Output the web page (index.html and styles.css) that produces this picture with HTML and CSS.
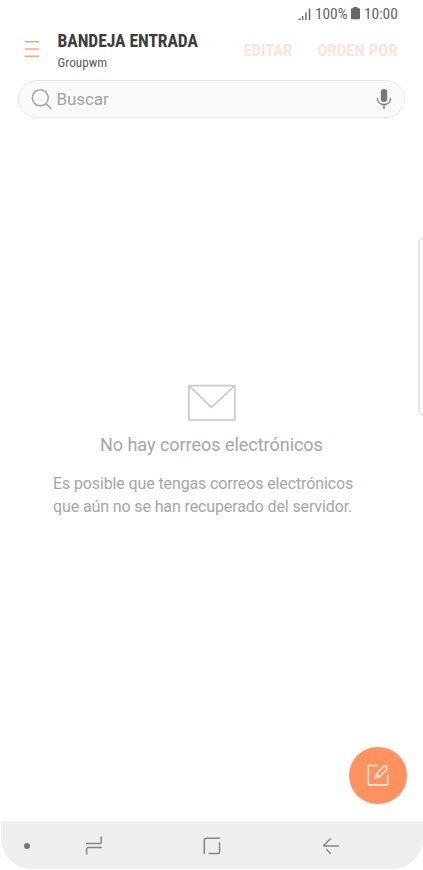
FILE: index.html
```html
<!DOCTYPE html>
<html lang="es">
<head>
    <meta charset="UTF-8">
    <meta name="viewport" content="width=device-width, initial-scale=1.0">
    <title>Bandeja entrada</title>
    <link rel="stylesheet" href="styles.css">
</head>
<body>

<div class="phone">
    <div class="status-bar">
        <svg class="signal" width="13" height="12" viewBox="0 0 13 12">
            <path d="M0 12L2.5 9.5V12ZM4 8H5.3V12H4ZM7.2 4.5H8.6V12H7.2ZM10.8 0.5H12.3V12H10.8Z"/>
        </svg>
        <span class="percent">100%</span>
        <svg class="battery" width="9" height="13" viewBox="0 0 9 13">
            <path d="M2.5 0H6.5V1.2H8.2Q9 1.2 9 2V11.5Q9 12.3 8.2 12.3H0.8Q0 12.3 0 11.5V2Q0 1.2 0.8 1.2H2.5Z"/>
        </svg>
        <span class="time">10:00</span>
    </div>

    <header class="header">
        <button type="button" class="menu" aria-label="Menu">
            <svg width="16" height="18" viewBox="0 0 16 18">
                <path d="M0.7 1.8H15.2M0.7 9H15.2M0.7 16.3H15.2"/>
            </svg>
        </button>
        <div class="heading">
            <h1>BANDEJA ENTRADA</h1>
            <p>Groupwm</p>
        </div>
        <button type="button" class="action edit">EDITAR</button>
        <button type="button" class="action sort">ORDEN POR</button>
    </header>

    <div class="search">
        <svg class="search-icon" width="21" height="21" viewBox="0 0 21 21">
            <circle cx="9.3" cy="8.8" r="8"/>
            <path d="M14.8 14.4L20.2 19.8"/>
        </svg>
        <span>Buscar</span>
        <svg class="mic" width="15" height="21" viewBox="0 0 15 21">
            <rect x="4.8" y="0" width="6.4" height="13" rx="3.2"/>
            <path d="M1.3 9.2C1.6 17.5 14.3 17.5 14.5 9.2M8 15.5V20"/>
        </svg>
    </div>

    <main class="empty">
        <svg width="48" height="38" viewBox="0 0 48 38">
            <rect x="0.9" y="1.7" width="45.9" height="34.5" rx="1"/>
            <path d="M1.4 2.2L23.6 23.3L46.2 2.2"/>
        </svg>
        <h2>No hay correos electrónicos</h2>
        <p>Es posible que tengas correos electrónicos<br>que aún no se han recuperado del servidor.</p>
    </main>

    <div class="edge-panel"></div>

    <button type="button" class="compose" aria-label="Redactar">
        <svg width="22" height="22" viewBox="0 0 22 22">
            <path d="M11 1.5H2.2Q1.3 1.5 1.3 2.4V20Q1.3 20.9 2.2 20.9H19.8Q20.7 20.9 20.7 20V11.3"/>
            <path d="M8.3 14L9.5 9.8L16.8 2.2Q17.6 1.4 18.5 2.2L20 3.7Q20.8 4.5 20 5.4L12.6 12.9ZM9.5 9.8L12.6 12.9"/>
        </svg>
    </button>

    <nav class="nav-bar">
        <span class="dot"></span>
        <svg class="recents" width="18" height="20" viewBox="0 0 18 20">
            <path d="M1 7.5H14.3Q16.2 7.5 16.2 5.7V0.6M1.6 18.5V13.3Q1.6 11.5 3.4 11.5H16.8"/>
        </svg>
        <svg class="home" width="18" height="18" viewBox="0 0 18 18">
            <path d="M1.3 17V3.2Q1.3 1.3 3.2 1.3H17M5.5 16.5H14.7Q16.5 16.5 16.5 14.7V5.2"/>
        </svg>
        <svg class="back" width="18" height="18" viewBox="0 0 18 18">
            <path d="M8.8 1.2L2 8.2Q1.3 9 2.2 9H16.8M4.3 12.2L8.8 16.8"/>
        </svg>
    </nav>
</div>

</body>
</html>
```
FILE: styles.css
```css
* {
    box-sizing: border-box;
}

body {
    margin: 0;
    background-color: #ffffff;
    font-family: Roboto, sans-serif;
}

h1, h2, p {
    margin: 0;
    font-weight: normal;
}

button {
    padding: 0;
    border: none;
    background: none;
    font-family: inherit;
}

svg {
    display: block;
    flex: none;
    fill: none;
}

.phone {
    position: relative;
    display: flex;
    flex-direction: column;
    height: 870px;
    overflow: hidden;
}

.status-bar {
    display: flex;
    align-items: center;
    height: 27px;
    padding-left: 298px;
    color: #646464;
    font-family: "Roboto Condensed", Roboto, sans-serif;
    font-stretch: condensed;
    font-size: 15.5px;
}

.status-bar svg {
    fill: #666666;
}

.percent {
    width: 32px;
    margin-left: 4px;
    letter-spacing: -0.1px;
}

.battery {
    margin: -1px 0 0 4px;
}

.time {
    margin-left: 4px;
    letter-spacing: -0.1px;
}

.header {
    display: flex;
    height: 53px;
    font-family: "Roboto Condensed", Roboto, sans-serif;
    font-stretch: condensed;
}

.menu {
    width: 16px;
    height: 18px;
    margin: 13px 0 0 24px;
}

.menu svg {
    stroke: #ffa47a;
    stroke-width: 1.5;
}

.heading {
    width: 186px;
    padding: 3px 0 0 17.5px;
    white-space: nowrap;
}

.heading h1 {
    color: #3c3c3c;
    font-size: 17.5px;
    font-weight: bold;
    letter-spacing: -0.05px;
    line-height: 22px;
}

.heading p {
    color: #5c5c5c;
    font-size: 13.2px;
    line-height: 21px;
}

.action {
    height: 20px;
    margin-top: 14px;
    color: #ffe4d9;
    font-size: 16.5px;
    font-weight: bold;
    font-stretch: condensed;
    line-height: 20px;
    text-align: left;
    white-space: nowrap;
}

.edit {
    width: 49px;
    margin-left: 17.5px;
}

.sort {
    width: 80px;
    margin-left: 25px;
    letter-spacing: 0.15px;
}

.search {
    display: flex;
    align-items: center;
    height: 38px;
    margin: 0 18px;
    padding: 0 13px 0 12px;
    border: 1px solid #e9e9e9;
    border-radius: 19px;
    background-color: #fafafa;
    color: #a3a3a3;
    font-size: 17px;
}

.search-icon {
    stroke: #a3a3a3;
    stroke-width: 1.5;
}

.search span {
    flex: 1;
    margin-left: 4.5px;
    letter-spacing: -0.1px;
}

.mic {
    stroke: #777777;
    stroke-width: 1.4;
}

.mic rect {
    fill: #777777;
    stroke: none;
}

.empty {
    flex: 1;
    padding-top: 266px;
    color: #a6a6a6;
}

.empty svg {
    margin-left: 188px;
    stroke: #cccccc;
    stroke-width: 1.8;
}

.empty h2 {
    margin: 11px 0 0 100px;
    font-size: 18px;
    letter-spacing: -0.03px;
    line-height: 24px;
}

.empty p {
    margin: 15px 0 0 53px;
    font-size: 16px;
    letter-spacing: -0.12px;
    line-height: 23px;
    white-space: nowrap;
}

.edge-panel {
    position: absolute;
    top: 237px;
    left: 418px;
    width: 12px;
    height: 179px;
    border: 2px solid #e6e6e6;
    border-radius: 6px;
}

.compose {
    position: absolute;
    top: 746.5px;
    left: 349px;
    display: flex;
    align-items: center;
    justify-content: center;
    width: 57.5px;
    height: 57.5px;
    border-radius: 50%;
    background-color: #ff925f;
}

.compose svg {
    stroke: #ffe9df;
    stroke-width: 1.6;
}

.nav-bar {
    display: flex;
    align-items: center;
    height: 48px;
    margin: 0 0 1px 1px;
    padding: 2px 0 0 23px;
    border-radius: 0 0 30px 30px;
    background-color: #efefef;
}

.nav-bar svg {
    stroke: #858585;
    stroke-width: 1.5;
}

.dot {
    width: 6px;
    height: 6px;
    border-radius: 50%;
    background-color: #777777;
}

.recents {
    margin-left: 55px;
}

.home {
    margin-left: 100px;
}

.back {
    margin-left: 101px;
}
```
